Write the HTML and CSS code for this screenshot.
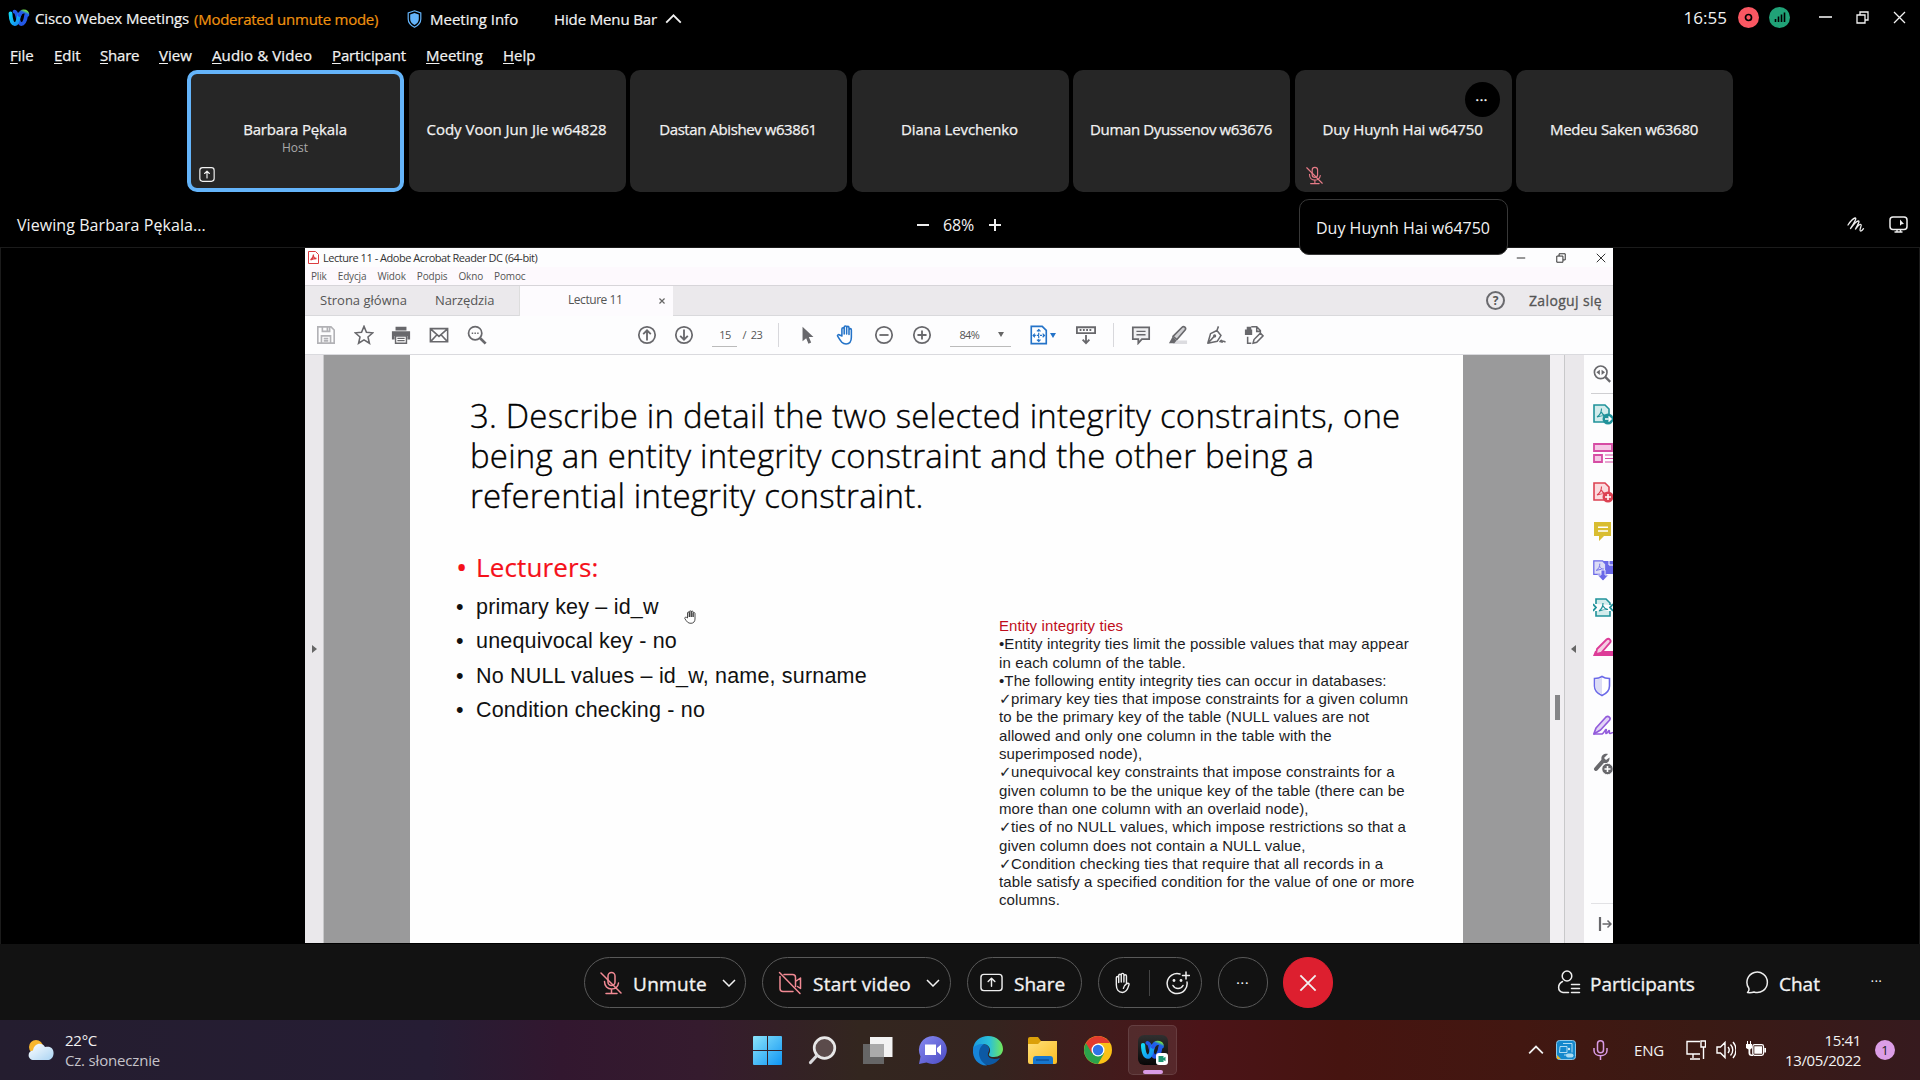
FILE: index.html
```html
<!DOCTYPE html>
<html lang="en">
<head>
<meta charset="utf-8">
<title>Cisco Webex Meetings</title>
<link rel="stylesheet" href="styles.css">
</head>
<body>
<svg width="0" height="0" class="defs" aria-hidden="true">
  <defs>
    <linearGradient id="wxa" x1="0" y1="0" x2="1" y2="1"><stop offset="0" stop-color="#12d8f5"/><stop offset="1" stop-color="#1686f0"/></linearGradient>
    <linearGradient id="wxb" x1="1" y1="0" x2="0" y2="1"><stop offset="0" stop-color="#74e04a"/><stop offset=".4" stop-color="#1d63e8"/><stop offset="1" stop-color="#2556e8"/></linearGradient>
    <linearGradient id="win" x1="0" y1="0" x2="1" y2="1"><stop offset="0" stop-color="#8be4fb"/><stop offset="1" stop-color="#0f95f3"/></linearGradient>
    <linearGradient id="chat" x1="0" y1="0" x2="1" y2="1"><stop offset="0" stop-color="#8689f0"/><stop offset="1" stop-color="#4c4cc4"/></linearGradient>
    <linearGradient id="edge" x1="0" y1="0" x2="1" y2="0"><stop offset="0" stop-color="#1a9ae0"/><stop offset=".55" stop-color="#2bc0d8"/><stop offset="1" stop-color="#72e858"/></linearGradient>
    <linearGradient id="folder" x1="0" y1="0" x2="1" y2="1"><stop offset="0" stop-color="#ffe07a"/><stop offset="1" stop-color="#fbbd22"/></linearGradient>
    <linearGradient id="cloud" x1="0" y1="0" x2="1" y2="1"><stop offset="0" stop-color="#fff"/><stop offset="1" stop-color="#a9d3f3"/></linearGradient>
    <symbol id="webex" viewBox="0 0 22 18"><g fill="none" stroke-width="3.800" stroke-linecap="round"><path stroke="#2358e6" d="M6.500 2.700C10 3 9.500 15 13.300 15c2.600 0 4.300-4.500 4.900-9"/><path stroke="url(#wxa)" d="M2.500 4.500C2.700 10 4 15 6.700 15c3 0 3.600-5.500 4.800-9.500"/><path stroke="url(#wxb)" d="M11.500 6c.9-2.300 2.300-3.500 4.300-3.500 2.300 0 3.700 1.200 3.600 3.300"/></g></symbol>
    <symbol id="mic-off" viewBox="0 0 22 24"><g fill="none" stroke="currentColor" stroke-width="1.500" stroke-linecap="round"><rect x="8" y="1.500" width="7" height="13" rx="3.500"/><path d="M4.500 10.500c0 4.500 3 7.500 7 7.500s6.500-2.500 7-6M11.500 18v4.500M6 22.500h11M1 2l20 20"/></g></symbol>
    <symbol id="share" viewBox="0 0 24 22"><g fill="none" stroke="currentColor" stroke-width="1.700" stroke-linecap="round" stroke-linejoin="round"><rect x="1.500" y="1" width="21" height="20" rx="4"/><path d="M12 16V6.500M8.500 9.500 12 6l3.500 3.500"/></g></symbol>
    <symbol id="chev" viewBox="0 0 14 8"><path fill="none" stroke="currentColor" stroke-width="1.500" d="m1 1 6 6 6-6"/></symbol>
    <symbol id="restore" viewBox="0 0 13 13"><path fill="none" stroke="currentColor" stroke-width="1.300" d="M1 4h8v8H1zM4 4V1h8v8H9"/></symbol>
    <symbol id="close" viewBox="0 0 13 13"><path stroke="currentColor" stroke-width="1.300" d="m1 1 11 11M12 1 1 12"/></symbol>
    <symbol id="pdf" viewBox="0 0 20 22"><path fill="var(--tint)" stroke="currentColor" stroke-width="1.600" d="M1 2h11l4 4v13H1z"/><path fill="none" stroke="currentColor" stroke-width="1.100" d="M4 14c3-2 4.500-4.500 4.500-8.500M8.500 9c.6 2 2 3.500 5 3.500-3 0-6.500.5-9.500 1.500"/></symbol>
  </defs>
</svg>

<header class="titlebar">
  <svg class="logo"><use href="#webex"/></svg>
  <span class="app-name">Cisco Webex Meetings</span>
  <span class="mode">(Moderated unmute mode)</span>
  <svg class="shield" viewBox="0 0 14 18"><path fill="none" stroke="#64b4fa" stroke-width="1.200" d="M7 .8 13.300 3v6c0 4-2.500 6.500-6.300 8.300C3.200 15.500.7 13 .7 9V3z"/><path fill="#64b4fa" d="m7 3 4.300 1.400V9c0 2.700-1.500 4.500-4.300 6-2.800-1.500-4.300-3.300-4.300-6V4.400z"/></svg>
  <span class="info">Meeting Info</span>
  <span class="hide">Hide Menu Bar</span>
  <svg class="chev-up"><use href="#chev"/></svg>
  <div class="window-tools">
    <span class="timer">16:55</span>
    <span class="dot rec"><svg viewBox="0 0 21 21"><circle cx="10.500" cy="10.500" r="3" fill="none" stroke="#000" stroke-width="1.700"/></svg></span>
    <span class="dot net"><svg viewBox="0 0 21 21"><path stroke="#000" stroke-width="1.600" d="M6.500 15v-3M9.500 15V9.500M12.500 15V7.500M15.500 15V5.500"/></svg></span>
    <svg class="wmin" viewBox="0 0 13 13"><path stroke="#fff" stroke-width="1.500" d="M0 6h13"/></svg>
    <svg class="wres"><use href="#restore"/></svg>
    <svg class="wclose"><use href="#close"/></svg>
  </div>
</header>

<nav class="menubar">
  <span class="m1"><u>F</u>ile</span><span class="m2"><u>E</u>dit</span><span class="m3"><u>S</u>hare</span><span class="m4"><u>V</u>iew</span><span class="m5"><u>A</u>udio &amp; Video</span><span class="m6"><u>P</u>articipant</span><span class="m7"><u>M</u>eeting</span><span><u>H</u>elp</span>
</nav>

<section class="people">
  <div class="tile active"><span class="n-mid">Barbara Pękala</span><small>Host</small><svg class="tile-share"><use href="#share"/></svg></div>
  <div class="tile"><span>Cody Voon Jun Jie w64828</span></div>
  <div class="tile"><span class="n-tight">Dastan Abishev w63861</span></div>
  <div class="tile"><span class="n-mid">Diana Levchenko</span></div>
  <div class="tile"><span class="n-tight2">Duman Dyussenov w63676</span></div>
  <div class="tile"><span class="n-mid">Duy Huynh Hai w64750</span><b class="more">•••</b><svg class="tile-mic"><use href="#mic-off"/></svg><div class="tooltip">Duy Huynh Hai w64750</div></div>
  <div class="tile"><span class="n-mid2">Medeu Saken w63680</span></div>
</section>

<section class="viewbar">
  <span class="viewing">Viewing Barbara Pękala...</span>
  <div class="zoom"><i class="minus"></i><span>68%</span><i class="plus"></i></div>
  <div class="view-tools">
    <svg width="18" height="16" viewBox="0 0 18 16"><path fill="none" stroke="#eee" stroke-width="1.300" stroke-linecap="round" stroke-linejoin="round" d="M1 8C3 5 6 1.500 8 1c2-.3 0 3.500-4.500 10.500C6.500 7.500 9.500 3.800 11.300 4c1.800.3-.5 3.500-2.800 8 2.300-3 4.300-5 5.500-4.500 1.300.700-2.300 5.500-.5 6.500 1 .300 2-.8 3-2.300"/></svg>
    <svg width="19" height="17" viewBox="0 0 19 17"><rect x="1" y="1" width="17" height="12.500" rx="3" fill="none" stroke="#eee" stroke-width="1.500"/><path fill="#eee" d="m11 3.500 4 4.500-2.300.2-1.700 1.600z"/><path stroke="#eee" stroke-width="1.400" d="M8 13v2.500M11.500 13v2.500M5.500 16h8"/></svg>
  </div>
</section>

<main class="stage">
  <div class="acrobat">
    <div class="a-title">
      <svg width="11" height="13" viewBox="0 0 11 13"><path fill="#fff" stroke="#dc3c40" d="M.5.5h7l3 3v9H.5z"/><path fill="none" stroke="#dc3c40" stroke-width="1.300" d="M2.500 9C4.500 7.500 5.500 6 5.500 3.500M5.500 5.500c.5 1.500 1.500 2 3 2-2 0-4 .5-6 1.500"/></svg>
      <span>Lecture 11 - Adobe Acrobat Reader DC (64-bit)</span>
      <div class="a-win"><svg viewBox="0 0 13 13"><path stroke="currentColor" stroke-width="1.300" d="M1 6.500h11"/></svg><svg><use href="#restore"/></svg><svg><use href="#close"/></svg></div>
    </div>
    <div class="a-menu"><span>Plik</span><span>Edycja</span><span>Widok</span><span>Podpis</span><span>Okno</span><span>Pomoc</span></div>
    <div class="a-tabs">
      <span class="t-home">Strona główna</span><span class="t-tools">Narzędzia</span>
      <div class="t-doc"><span>Lecture 11</span><svg viewBox="0 0 13 13"><path stroke="#666" stroke-width="2.600" d="m1 1 11 11M12 1 1 12"/></svg></div>
      <span class="help">?</span><span class="login">Zaloguj się</span>
    </div>
    <div class="a-bar">
      <div class="grp g1">
        <svg viewBox="0 0 22 22"><g fill="none" stroke="#b2b2b6" stroke-width="1.800"><path d="M2 2h14.500L20 5.500V20H2zM6 20v-8h10v8M7 2v5h8V2M8.500 15h5M8.500 17.500h5M12.500 3v3"/></g></svg>
        <svg viewBox="0 0 22 22"><path fill="none" stroke="#68686c" stroke-width="1.700" d="m11 1.500 2.700 6.500 7 .6-5.300 4.600 1.600 6.900L11 16.400l-6 3.700 1.600-6.900L1.300 8.600l7-.6z"/></svg>
        <svg viewBox="0 0 22 22"><path fill="#68686c" d="M5 2h12v4H5zM1 7h20v9h-3v-4H4v4H1z"/><path fill="#fff" stroke="#68686c" stroke-width="1.600" d="M5 12h12v8H5z"/><path stroke="#68686c" stroke-width="1.300" d="M7 14.700h8M7 17.200h8"/></svg>
        <svg viewBox="0 0 22 22"><path fill="none" stroke="#68686c" stroke-width="1.700" d="M1.500 4h19v14.500h-19zM2 4.500l9 8 9-8M2 18l6.500-7M20 18l-6.500-7"/></svg>
        <svg viewBox="0 0 22 22"><circle cx="9" cy="9" r="7.300" fill="none" stroke="#68686c" stroke-width="1.900"/><path stroke="#68686c" stroke-width="3" d="m14.500 14.500 6 6"/><path stroke="#68686c" stroke-width="1.600" stroke-dasharray="1.600 1.400" d="M5.200 9h8"/></svg>
      </div>
      <div class="grp g2">
        <svg viewBox="0 0 22 22"><circle cx="11" cy="11" r="9" fill="none" stroke="#68686c" stroke-width="1.900"/><path fill="none" stroke="#68686c" stroke-width="2" d="M11 17V6M6.800 10 11 5.800l4.200 4.200"/></svg>
        <svg viewBox="0 0 22 22"><circle cx="11" cy="11" r="9" fill="none" stroke="#68686c" stroke-width="1.900"/><path fill="none" stroke="#68686c" stroke-width="2" d="M11 5v11M6.800 12l4.200 4.200 4.200-4.200"/></svg>
      </div>
      <span class="page-no">15</span><span class="page-of">/&nbsp; 23</span><i class="sep"></i>
      <div class="grp g3">
        <svg viewBox="0 0 22 22"><path fill="#68686c" d="M5 2v16l4-3.500 2.500 6 3-1.300-2.600-6H17z"/></svg>
        <svg viewBox="0 0 22 22"><path fill="#fff" stroke="#2473c8" stroke-width="1.700" stroke-linejoin="round" d="M6.500 12V4.500c0-2 2.500-2 2.500 0V10 2.500c0-2 2.700-2 2.700 0V10 3c0-2 2.600-2 2.600 0v7.500-5c0-2 2.600-2 2.600 0v8c0 5-2 7.300-5.800 7.300-4 0-5.500-2.200-9.300-8.500-.7-1.300 1-2.300 2.200-1.200z"/></svg>
        <svg viewBox="0 0 22 22"><circle cx="11" cy="11" r="9" fill="none" stroke="#68686c" stroke-width="1.900"/><path stroke="#68686c" stroke-width="2" d="M6 11h10"/></svg>
        <svg viewBox="0 0 22 22"><circle cx="11" cy="11" r="9" fill="none" stroke="#68686c" stroke-width="1.900"/><path stroke="#68686c" stroke-width="2" d="M6 11h10M11 6v10"/></svg>
      </div>
      <div class="scale"><span>84%</span><i class="caret"></i></div>
      <svg class="fit" viewBox="0 0 22 22"><path fill="#fff" stroke="#2473c8" stroke-width="1.800" d="M2.500 1.500h12l4.500 4.500v14.500H2.500z"/><path fill="none" stroke="#2473c8" stroke-width="1.300" stroke-dasharray="2.500 1" d="M10.700 5v13M5 11.500h12"/><path fill="none" stroke="#2473c8" stroke-width="1.300" d="M8.700 7l2-2 2 2M8.700 16l2 2 2-2M6.500 9.500l-2 2 2 2M15 9.500l2 2-2 2"/></svg><i class="caret blue"></i>
      <svg class="ruler" viewBox="0 0 22 22"><path fill="none" stroke="#68686c" stroke-width="2" d="M1 2.500h20V9H1zM11 11v9M7.300 16l3.700 4 3.700-4"/><path stroke="#68686c" stroke-width="2" stroke-dasharray="2 1.600" d="M4 5.500h14"/></svg>
      <i class="sep s2"></i>
      <div class="grp g4">
        <svg viewBox="0 0 22 22"><path fill="#f0f0f2" stroke="#68686c" stroke-width="1.900" d="M2 2.500h18v13h-8l-4 4.500v-4.500H2z"/><path stroke="#68686c" stroke-width="1.500" d="M6 7h10M6 10.700h10"/></svg>
        <svg viewBox="0 0 22 22"><path fill="#dcdce0" d="M9 17h12v4H5z"/><path fill="#cfcfd2" stroke="#68686c" stroke-width="1.800" stroke-linejoin="round" d="m5.500 12.500 10-10c2-2 5 .8 3.300 2.900l-9 10.600z"/><path fill="#68686c" d="m5 13 4.500 4L7 20H1z"/></svg>
        <svg viewBox="0 0 22 22"><path fill="none" stroke="#68686c" stroke-width="1.700" stroke-linejoin="round" d="M2 20 5 9.500l7-3.500 4.500 5.500-4 6.300zM12 6l1.700-4.500M2 20l7-7.500M15 19c2-3 3-2.500 2.500 0 1-1.500 2.200-1.500 4 0"/><circle cx="9.500" cy="12" r="1.800" fill="#68686c"/></svg>
        <svg viewBox="0 0 22 22"><path fill="#68686c" d="M1 5h8v6H1zM3 2h5v3H3z"/><path fill="none" stroke="#68686c" stroke-width="1.700" d="M8 2h6l4 4v3M14 2v5h4M4 13v7h4M10 20l1-4 7-7 3 3-7 7z"/></svg>
      </div>
    </div>
    <div class="a-body">
      <div class="rail"><i class="tri right"></i></div>
      <div class="canvas">
        <article class="page">
          <h1>3. Describe in detail the two selected integrity constraints, one<br>being an entity integrity constraint and the other being a<br>referential integrity constraint.</h1>
          <div class="columns">
            <ul>
              <li class="red">Lecturers:</li>
              <li>primary key – id_w<svg class="grab" viewBox="0 0 13 14"><path fill="#fff" stroke="#222" stroke-width=".8" stroke-linejoin="round" d="M3.500 8V3c0-1.300 1.800-1.300 1.800 0V7 1.800c0-1.300 1.900-1.300 1.900 0V7 2c0-1.300 1.900-1.300 1.900 0v5-3.500c0-1.300 1.900-1.300 1.900 0V9c0 2.500-1.500 4.300-4 4.300C4 13.300 3 12 .8 8.500c-.5-1 1-2 2.700-.5z"/></svg></li>
              <li>unequivocal key - no</li>
              <li>No NULL values – id_w, name, surname</li>
              <li>Condition checking - no</li>
            </ul>
            <div class="notes">
              <p class="dark-red">Entity integrity ties</p>
              <p>•Entity integrity ties limit the possible values that may appear<br>in each column of the table.</p>
              <p>•The following entity integrity ties can occur in databases:</p>
              <p><b>✓</b>primary key ties that impose constraints for a given column<br>to be the primary key of the table (NULL values are not<br>allowed and only one column in the table with the<br>superimposed node),</p>
              <p><b>✓</b>unequivocal key constraints that impose constraints for a<br>given column to be the unique key of the table (there can be<br>more than one column with an overlaid node),</p>
              <p><b>✓</b>ties of no NULL values, which impose restrictions so that a<br>given column does not contain a NULL value,</p>
              <p><b>✓</b>Condition checking ties that require that all records in a<br>table satisfy a specified condition for the value of one or more<br>columns.</p>
            </div>
          </div>
        </article>
      </div>
      <div class="scroll"><i></i></div>
      <div class="rail r2"><i class="tri left"></i></div>
      <aside class="side">
        <svg class="gray first" viewBox="0 0 20 22"><circle cx="8.500" cy="8.500" r="7.300" fill="none" stroke="currentColor" stroke-width="1.900"/><path stroke="currentColor" stroke-width="2.800" d="m13.500 13.500 6 6"/><path fill="currentColor" d="M7.500 5.500v6l-4-3zM9.500 5.500v6l4-3z"/></svg>
        <hr>
        <div class="tools">
          <svg class="teal" viewBox="0 0 20 22"><use href="#pdf" width="20" height="22"/><circle cx="15" cy="16" r="5.500" fill="currentColor"/><path fill="none" stroke="#fff" stroke-width="1.500" d="M12 16h5.500M15.500 13.500 18 16l-2.500 2.500"/></svg>
          <svg class="pink" viewBox="0 0 20 22"><path fill="var(--tint)" stroke="currentColor" stroke-width="1.800" d="M1 2h18v7H1zM1 13h8v7H1z"/><path stroke="currentColor" stroke-width="1.200" d="M12 13h8M12 16.500h8M12 20h8"/></svg>
          <svg class="redi" viewBox="0 0 20 22"><use href="#pdf" width="20" height="22"/><circle cx="15" cy="16" r="5.500" fill="currentColor"/><path stroke="#fff" stroke-width="1.500" d="M12 16h6M15 13v6"/></svg>
          <svg class="yellow" viewBox="0 0 20 22"><path fill="currentColor" d="M1 2h17v14H11l-5 5v-5H1z"/><path stroke="#fff" stroke-width="1.500" d="M5 7.300h10M5 11h10"/></svg>
          <svg class="blue" viewBox="0 0 20 22"><path fill="currentColor" d="M10 2h10v13H10z"/><use href="#pdf" width="16" height="18"/><path fill="currentColor" stroke="#fff" stroke-width=".8" d="M8 11h4v5h3.500L10 22l-5.500-6H8z"/><path fill="none" stroke="#fff" d="M16 2v4h4"/></svg>
          <svg class="teal" viewBox="0 0 20 22"><path fill="var(--tint)" stroke="currentColor" stroke-width="1.600" d="M3 7V2h10l4 4v2M3 14v5h14v-5"/><path fill="none" stroke="currentColor" stroke-width="1.800" d="m0 7 3 3.500L0 14M20 7l-3 3.500 3 3.500"/><path fill="none" stroke="currentColor" stroke-width="1.200" d="M6 14c3-2 4-4.500 4-8M10 9c1 2 2 3 5 3.500-4 0-6 .5-9 1.500"/></svg>
          <svg class="magenta" viewBox="0 0 20 22"><path fill="currentColor" d="M9 15h11v5H0l2-5z"/><path fill="var(--tint)" stroke="currentColor" stroke-width="1.800" d="m4 13 9.500-9.500c2.500-2 5.500 1 3.300 3.400L8.500 16.500 3 18z"/></svg>
          <svg class="blue" viewBox="0 0 20 22"><path fill="#fff" stroke="currentColor" stroke-width="1.600" d="M9 1.500c2.500 1.800 5 2 7.500 2V11c0 5-3 7.500-7.500 9.500C4.500 18.500 1.500 16 1.500 11V3.500c2.500 0 5-.2 7.500-2z"/><path fill="var(--tint)" d="M9 2.700v16.600C5 17.500 2.400 15 2.400 11V4.400C5 4.300 7 4 9 2.700z"/></svg>
          <svg class="purple" viewBox="0 0 20 22"><path fill="var(--tint)" stroke="currentColor" stroke-width="1.700" stroke-linejoin="round" d="m3 14 10-11c2.300-1.800 5.300.8 3.500 3.200L7.500 16 .8 20z"/><path fill="none" stroke="currentColor" stroke-width="1.600" d="M1 20h8c2-1 3-4 4-4.500s-1 4 .3 4 1.700-3 2.700-3-.5 3 1 3 2-1 3-1"/></svg>
          <svg class="gray" viewBox="0 0 20 22"><path fill="none" stroke="currentColor" stroke-width="4" stroke-linecap="round" d="m3 16 7-8"/><path fill="currentColor" d="M15 1c-5-1-8 3-6 7s8 2 7.500-3.500L13 7l-2-2z"/><circle cx="14.500" cy="16" r="5.700" fill="currentColor" stroke="#fff" stroke-width=".8"/><path stroke="#fff" stroke-width="1.600" d="M11.500 16h6M14.500 13v6"/></svg>
        </div>
        <hr class="low">
        <svg class="gray out" viewBox="0 0 14 14"><path fill="none" stroke="currentColor" stroke-width="2.200" d="M2 0v14"/><path fill="none" stroke="currentColor" stroke-width="1.500" d="M4.500 7H13M9.500 3.500 13 7l-3.500 3.500"/></svg>
      </aside>
    </div>
  </div>
</main>

<footer class="controls">
  <div class="side-space"></div>
  <div class="buttons">
    <div class="pill unmute"><svg class="ic-mic"><use href="#mic-off"/></svg><span>Unmute</span><svg class="dn"><use href="#chev"/></svg></div>
    <div class="pill video"><svg class="ic-vid" viewBox="0 0 24 24"><g fill="none" stroke="currentColor" stroke-width="1.500" stroke-linecap="round" stroke-linejoin="round"><path d="M6 3.500h8.500a3 3 0 0 1 3 3v9M15 20.500H5a3 3 0 0 1-3-3v-12M17.500 10.500l5-3.500v10.500l-3-2M1.500 1.500 22 22.500"/></g></svg><span>Start video</span><svg class="dn"><use href="#chev"/></svg></div>
    <div class="pill sharebtn"><svg class="ic-share" viewBox="0 0 24 19"><g fill="none" stroke="#eee" stroke-width="1.500" stroke-linecap="round" stroke-linejoin="round"><rect x="1" y="1" width="22" height="17" rx="3"/><path d="M12 13.500V5.500M8.500 8.500 12 5l3.500 3.500"/></g></svg><span>Share</span></div>
    <div class="pill react">
      <svg width="15" height="22" viewBox="0 0 17 24"><path fill="none" stroke="#eee" stroke-width="1.600" stroke-linejoin="round" stroke-linecap="round" d="M1.500 14V6c0-1.800 2.700-1.800 2.700 0v5.500V3.500c0-1.900 2.900-1.900 2.900 0v7.500V2.500c0-1.900 3-1.900 3 0V11V4c0-1.900 2.900-1.900 2.900 0v9c2-1.500 3.300-.4 2.800 1.100C14.500 19 13 22.700 8.500 22.700S1.500 19 1.500 14zM9.500 18c.3-2 1.500-3.800 3.500-5"/></svg>
      <i></i>
      <svg width="24" height="24" viewBox="0 0 24 24"><path fill="none" stroke="#eee" stroke-width="1.500" stroke-linecap="round" d="M14 3A10 10 0 1 0 21 11M7 14.500c2 4 8 4 10 0M20 1v7M16.500 4.500h7"/><circle cx="8" cy="9.500" r="1.400" fill="#eee"/><circle cx="15" cy="9.500" r="1.400" fill="#eee"/></svg>
    </div>
    <div class="pill round">•••</div>
    <div class="pill round leave"><svg><use href="#close"/></svg></div>
  </div>
  <div class="panels">
    <svg class="ic-part" viewBox="0 0 24 24"><g fill="none" stroke="#eee" stroke-width="1.500" stroke-linecap="round"><ellipse cx="10" cy="6" rx="4.800" ry="5"/><path d="M11.500 22.500H6c-6-1-5.500-8.500-.5-11M14.500 14.500h8M14.500 18.500h8M14.500 22.500h8"/></g></svg>
    <span class="participants">Participants</span>
    <svg class="ic-chat" viewBox="0 0 23 23"><path fill="none" stroke="#eee" stroke-width="1.500" stroke-linejoin="round" d="M1.500 21.500c1.500-1.500 2-2.500 1.200-4.500A10.200 10.200 0 1 1 8 21c-2.500.8-4 .8-6.500.5z"/></svg>
    <span>Chat</span><span class="dots">•••</span>
  </div>
</footer>

<footer class="taskbar">
  <div class="weather">
    <svg width="26" height="22" viewBox="0 0 26 22"><circle cx="8" cy="8" r="7" fill="#f8b62c"/><path fill="url(#cloud)" d="M6 21c-7 0-7-9-1-9.500C6 4 14 2.500 17 8c6-1.500 9 2 8.500 7-.5 4-3 6-6 6z"/></svg>
    <div><b>22°C</b><span>Cz. słonecznie</span></div>
  </div>
  <div class="apps">
    <div><svg width="29" height="29" viewBox="0 0 29 29"><path fill="url(#win)" d="M0 1q0-1 1-1h13v14H0zM15 0h13q1 0 1 1v13H15zM0 15h14v14H1q-1 0-1-1zM15 15h14v13q0 1-1 1H15z"/></svg></div>
    <div><svg width="29" height="29" viewBox="0 0 29 29"><circle cx="16.500" cy="12" r="10.300" fill="#5b4b4b" stroke="#e8e8e8" stroke-width="2.700"/><path stroke="#d9d9dc" stroke-width="3.200" stroke-linecap="round" d="m8.500 20-6 6.500"/></svg></div>
    <div><svg width="31" height="29" viewBox="0 0 31 29"><path fill="#666" d="M1 8h21v20H1z"/><path fill="#f3f3f3" d="M8 1h22.500v20H8z"/><path fill="#aaa" d="M8 8h14v13H8z"/></svg></div>
    <div><svg width="30" height="30" viewBox="0 0 30 30"><path fill="url(#chat)" d="M15 1a14 14 0 1 1-6.500 26.500L1 29l1.500-7.500A14 14 0 0 1 15 1z"/><path fill="#fff" d="M7 9.500h11V20H7zM19 13l4-3.500V20l-4-3.500z"/></svg></div>
    <div><svg width="31" height="31" viewBox="0 0 31 31"><path fill="#0c59a4" d="M1 14c1-3 5-5 9-5 6 0 8 4 7 7-4 6 3 10 11 7-5 8-15 9-21 4-4-3-6-8-6-13z"/><path fill="#1684d8" d="M1 14c1-5 6-7 11-5-5 3-6 9-4 14 1 3 4 6 7 7.500C7 31 0 24 1 14z"/><path fill="url(#edge)" d="M1 14C2 6 8 1 16 1c9 0 15 6 15 13 0 5-4 8-9 8-5 0-6-2-4.500-4 2-4-1-9-6.500-9S2 11 1 14z"/></svg></div>
    <div><svg width="31" height="29" viewBox="0 0 31 29"><path fill="#dba009" d="M1 3q0-2 2-2h8l3 4v6H1z"/><path fill="url(#folder)" d="M1 8h10l3-3h16v21q0 2-2 2H3q-2 0-2-2z"/><path fill="#1777cf" d="M6 28v-5q0-3 3-3h14q3 0 3 3v5z"/><path stroke="#0b4b93" stroke-width="1.300" d="M9 24h13"/></svg></div>
    <div><svg width="28" height="28" viewBox="0 0 28 28"><circle cx="14" cy="14" r="14" fill="#fbc116"/><path fill="#2ba24c" d="M14 14 1.900 7A14 14 0 0 0 14 28l6-10.500z"/><path fill="#e33b2e" d="M1.900 7a14 14 0 0 1 24.200 0H14l-6 10.500z"/><circle cx="14" cy="14" r="6.500" fill="#fff"/><circle cx="14" cy="14" r="5.200" fill="#3074e8"/></svg></div>
    <div class="current"><span class="wx"><svg class="wxl"><use href="#webex"/></svg><svg class="wxb" viewBox="0 0 12 12"><rect width="12" height="12" rx="3" fill="#fff"/><path fill="#1a9572" d="M2.500 3h5v2l2-1.200v4.400l-2-1.200v2h-5z"/></svg></span></div>
  </div>
  <div class="tray">
    <svg class="t-chev"><use href="#chev"/></svg>
    <svg class="t-intel" viewBox="0 0 20 20"><rect x=".5" y=".5" width="19" height="19" rx="3" fill="#1488cd" stroke="#8cc8ea"/><path fill="none" stroke="#bfe3f7" stroke-width=".9" d="M4 6.500h7v6H3.500zM7 3.500h9v9M8 15h4"/><circle cx="13" cy="9" r="1.200" fill="#cfeaf8"/><rect x="10" y="13.500" width="7.500" height="4" rx="2" fill="#a9dbf3"/><path fill="#e7b733" d="M1 15v4h4z"/></svg>
    <svg class="t-mic" viewBox="0 0 15 20"><g fill="none" stroke="#d99be5" stroke-width="1.500"><rect x="4.500" y=".8" width="6" height="12" rx="3"/><path d="M1 8v2.500c0 7 13 7 13 0V8M7.500 16v4"/></g></svg>
    <span class="lang">ENG</span>
    <svg class="t-net" viewBox="0 0 20 20"><path fill="none" stroke="#fff" stroke-width="1.400" d="M14 1.500H1v12.500h13M7 14v4M4 19h10M17.500 7v12M15 1h4.500v6H15z"/></svg>
    <svg class="t-vol" viewBox="0 0 20 20"><path fill="none" stroke="#fff" stroke-width="1.400" d="M1 7h3.500L9 2.500v15L4.500 13H1zM12 7c1.500 1.800 1.500 4.200 0 6M14.500 4.500c3 3 3 8 0 11M17 2c4 4.500 4 11.500 0 16"/></svg>
    <svg class="t-bat" viewBox="0 0 20 20"><path fill="#fff" d="M1 1h1v3h2V1h1v3h1v4L4.300 9.500V13q0 1.500 1.500 1.500H7V16H5.500Q2.500 16 2.500 13V9.500L0 8V4h1z"/><rect x="6.800" y="4.700" width="10.700" height="10.600" rx="1.800" fill="none" stroke="#fff" stroke-width="1.300"/><path fill="#fff" d="M8.300 6.300H16v7.400H8.300zM18.300 8H20v4.500h-1.700z"/></svg>
    <div class="clock"><span>15:41</span><span>13/05/2022</span></div>
    <span class="badge">1</span>
  </div>
</footer>
</body>
</html>
```
FILE: styles.css
```css
* { box-sizing: border-box; }
body { margin: 0; width: 1920px; height: 1080px; overflow: hidden; display: flex; flex-direction: column; background: #000; color: #f2f2f2; font: 15px/20px "Open Sans", "Noto Sans", sans-serif; }
svg { display: block; flex: none; }
span { white-space: nowrap; }
i { display: block; flex: none; }
.defs { position: absolute; }

.titlebar { height: 38px; flex: none; display: flex; align-items: center; padding: 0 0 1px 8px; -webkit-text-stroke: .2px; }
.logo { width: 22px; height: 18px; margin-right: 5px; margin-top: -2px; }
.app-name { width: 159px; letter-spacing: -.1px; margin-top: -1px; }
.mode { width: 213px; color: #ef920f; letter-spacing: -.25px; }
.shield { width: 15px; height: 18px; margin-right: 8px; }
.info { width: 124px; }
.hide { width: 111px; letter-spacing: -.13px; }
.chev-up { width: 17px; height: 10px; transform: scaleY(-1); }
.window-tools { margin-left: auto; padding: 0 14px 2px 0; display: flex; align-items: center; -webkit-text-stroke: 0; }
.timer { font-size: 17px; width: 54px; letter-spacing: 0; }
.dot { width: 21px; height: 21px; border-radius: 50%; margin-right: 10.500px; }
.dot svg { width: 21px; height: 21px; }
.rec { background: #fa5762; }
.net { background: #20a277; }
.wmin, .wres, .wclose { width: 13px; height: 13px; }
.wmin { margin: 0 24.500px 0 18px; }
.wres { margin-right: 24px; }

.menubar { height: 32px; flex: none; display: flex; padding: 7px 0 0 10px; -webkit-text-stroke: .25px; }
.menubar u { text-decoration-thickness: 1px; text-underline-offset: 2px; }
.m1 { width: 44px; } .m2 { width: 46px; } .m3 { width: 59px; letter-spacing: -.2px; } .m4 { width: 53px; } .m5 { width: 120px; letter-spacing: .1px; } .m6 { width: 94px; letter-spacing: -.15px; } .m7 { width: 77px; }

.people { height: 122px; flex: none; display: grid; grid-template-columns: repeat(7, 217px); gap: 4.500px; padding-left: 187px; }
.tile { position: relative; background: #262626; border-radius: 10px; display: flex; flex-direction: column; align-items: center; padding: 49px 1px 0 0; -webkit-text-stroke: .25px; }
.tile.active { border: 4px solid #64b4fa; padding-top: 45px; }
.tile small { font-size: 12px; line-height: 16px; color: #aaa; margin-top: 1px; -webkit-text-stroke: 0; }
.n-mid { letter-spacing: -.15px; } .n-mid2 { letter-spacing: -.28px; } .n-tight { letter-spacing: -.42px; } .n-tight2 { letter-spacing: -.36px; }
.tile-share { position: absolute; left: 7px; bottom: 6px; width: 18px; height: 15px; }
.tile-mic { position: absolute; left: 11px; bottom: 7px; width: 17px; height: 19px; color: #e77b87; }
.more { position: absolute; right: 12px; top: 12px; width: 35px; height: 35px; border-radius: 50%; background: #000; font: 8px/35px "Open Sans", sans-serif; letter-spacing: 1.200px; text-align: center; }
.tooltip { position: absolute; z-index: 5; left: 4px; top: 129px; width: 209px; height: 56px; border: 1px solid #383838; border-radius: 10px; background: #000; font-size: 16px; line-height: 56px; text-align: center; white-space: nowrap; -webkit-text-stroke: 0; }

.viewbar { height: 56px; flex: none; display: grid; grid-template-columns: 917px 1fr auto; align-items: center; padding: 10px 12px 0 0; border-bottom: 1px solid #1b1b1b; }
.viewing { padding-left: 17px; font-size: 16px; letter-spacing: .07px; }
.zoom { display: flex; align-items: center; gap: 14px; font-size: 16px; }
.zoom span { letter-spacing: -.2px; width: 32px; }
.minus, .plus { width: 12px; height: 12px; background: linear-gradient(#eee, #eee) center / 12px 2px no-repeat; }
.plus { background: linear-gradient(#eee, #eee) center / 12px 2px no-repeat, linear-gradient(#eee, #eee) center / 2px 12px no-repeat; }
.view-tools { display: flex; gap: 24px; align-items: center; }

.stage { height: 696px; flex: none; display: flex; justify-content: center; padding-right: 2px; border-left: 1px solid #1b1b1b; border-right: 1px solid #1b1b1b; }
.acrobat { width: 1308px; height: 695px; background: #fdfdfe; color: #555; display: flex; flex-direction: column; overflow: hidden; }
.a-title { height: 19px; flex: none; display: flex; align-items: center; padding-left: 3px; color: #333; font-size: 11px; letter-spacing: -.47px; }
.a-title span { margin-left: 4px; }
.a-win { margin-left: auto; display: flex; gap: 30px; padding-right: 7px; }
.a-win svg { width: 10px; height: 10px; }
.a-menu { height: 19px; flex: none; display: flex; gap: 11px; padding-left: 6px; font-size: 10px; line-height: 18px; letter-spacing: -.15px; background: #fdf9fd; border-bottom: 1px solid #d7d5d9; }
.a-tabs { height: 30px; flex: none; display: flex; align-items: center; background: #ebe9ec; border-bottom: 1px solid #d9d9dc; }
.a-tabs span { margin-top: -1px; }
.t-home { padding-left: 15px; width: 130px; font-size: 13px; }
.t-tools { width: 84px; font-size: 13px; letter-spacing: -.1px; }
.t-doc { width: 154px; height: 30px; background: #fdfbfe; display: flex; align-items: center; padding-left: 48px; font-size: 12px; letter-spacing: -.45px; border-left: 1px solid #ddd; }
.t-doc svg { width: 6px; height: 6px; margin-left: 37px; }
.a-tabs .help { margin: -1px 0 0 auto; width: 19px; height: 19px; border: 2px solid #6a6a6e; border-radius: 50%; text-align: center; font-weight: 700; font-size: 12px; line-height: 15px; }
.a-tabs .login { width: 73px; margin: 1px 11px 0 24px; font-size: 14px; letter-spacing: .35px; -webkit-text-stroke: .3px; }
.a-bar { height: 39px; flex: none; display: flex; align-items: center; border-bottom: 1px solid #dadade; font-size: 11px; }
.grp { display: flex; gap: 17.700px; }
.grp svg, .fit, .ruler { width: 20px; height: 20px; }
.g1 { margin-left: 11px; }
.g2 { margin-left: 150px; }
.page-no { width: 25px; margin-left: 18px; text-align: center; border-bottom: 1px solid #bbb; line-height: 22px; letter-spacing: -.5px; }
.page-of { margin-left: 5px; width: 22px; letter-spacing: -.5px; }
.sep { width: 1px; height: 24px; background: #d8d8dc; margin-left: 14px; }
.g3 { margin-left: 19px; }
.scale { width: 61px; margin-left: 18px; display: flex; align-items: center; justify-content: space-between; padding: 0 7px 0 10px; line-height: 22px; border-bottom: 1px solid #bbb; letter-spacing: -.7px; }
.caret { border: 3.500px solid transparent; border-top: 5px solid #666; border-bottom: 0; }
.fit { margin-left: 18px; }
.caret.blue { border-top-color: #2473c8; margin-left: 1px; }
.ruler { margin-left: 20px; }
.s2 { margin-left: 17px; }
.g4 { margin-left: 17px; }

.a-body { flex: 1; display: flex; min-height: 0; }
.rail { width: 19px; background: #eae8eb; display: flex; align-items: center; justify-content: center; border-right: 1px solid #c8c8ca; }
.r2 { width: 20px; border-right: 0; border-left: 1px solid #c8c8ca; padding-right: 2px; }
.tri { border: 4px solid transparent; }
.tri.right { border-left: 5px solid #666; border-right: 0; }
.tri.left { border-right: 5px solid #666; border-left: 0; }
.canvas { width: 1226px; background: #9a9a9b; padding: 0 87px 0 86px; }
.page { height: 100%; background: #fefefe; color: #111; padding-top: 41px; overflow: hidden; }
h1 { margin: 0 0 0 60px; font: 300 33px/40px "Open Sans", sans-serif; letter-spacing: .2px; white-space: nowrap; color: #000; -webkit-text-stroke: .35px; }
.columns { display: flex; justify-content: space-between; padding: 33px 0 0 46px; }
ul { list-style: none; margin: 0; padding: 0; font: 21.500px/34.300px "Liberation Sans", Arial, sans-serif; letter-spacing: .19px; }
li { display: flex; white-space: nowrap; }
li::before { content: "•"; width: 20px; flex: none; }
li.red { color: #f5101a; font: 26px/36px "Open Sans", sans-serif; letter-spacing: .15px; margin-bottom: 5px; -webkit-text-stroke: .2px; }
li.red::before { font-size: 30px; }
.grab { width: 13px; height: 14px; margin: 20px 0 0 25px; }
.notes { width: 464px; margin-top: 68px; font: 15px/18.300px "Liberation Sans", Arial, sans-serif; letter-spacing: .12px; color: #1c1c24; }
.notes p { margin: 0; white-space: nowrap; }
.notes p.dark-red { color: #c00d1b; }
.notes b { display: inline-block; width: 12px; font: 15px/16px "DejaVu Sans", sans-serif; letter-spacing: 0; }
.scroll { width: 14px; background: #f1eff2; padding: 340px 0 0 5px; }
.scroll i { width: 5px; height: 25px; background: #858588; }
.side { width: 29px; padding-left: 9px; overflow: hidden; }
.side svg { width: 20px; height: 22px; --tint: #fff; }
.side .first { width: 18px; height: 19px; margin-top: 10px; }
.side hr { width: 22px; height: 1px; background: #cfcfd2; border: 0; margin: 9px 0 9px -2px; }
.tools { display: flex; flex-direction: column; gap: 16.900px; }
.side .gray { color: #68686c; } .side .teal { color: #20929a; --tint: #d3ecec; } .side .pink { color: #d64ca4; --tint: #f5c9e6; } .side .redi { color: #dc4252; --tint: #fbdcdf; } .side .yellow { color: #d9bd31; } .side .blue { color: #6b69e8; --tint: #dcdcf5; } .side .magenta { color: #dd3c98; --tint: #f5cde2; } .side .purple { color: #925bdb; --tint: #e2d3f6; }
.side hr.low { margin: 128px 0 13px -2px; background: #e2e2e5; }
.side .out { width: 14px; height: 14px; margin-left: 5px; }

.controls { height: 76px; flex: none; background: #121212; display: flex; padding-top: 13px; font-size: 19px; }
.controls span { -webkit-text-stroke: .35px; margin-top: 3px; }
.side-space { width: 584px; }
.buttons { display: flex; gap: 16px; width: 973px; }
.pill { height: 51px; border: 1px solid #595959; border-radius: 26px; display: flex; align-items: center; }
.unmute { width: 162px; } .video { width: 189px; } .sharebtn { width: 115px; } .react { width: 104px; } .round { width: 50px; justify-content: center; font-size: 8px; letter-spacing: 1.300px; }
.ic-mic { width: 22px; height: 24px; margin: 0 11px 0 15px; color: #f28a94; }
.unmute span { width: 89px; letter-spacing: .3px; }
.dn { width: 14px; height: 8px; }
.ic-vid { width: 24px; height: 24px; margin: 0 11px 0 15px; color: #f28a94; }
.video span { width: 113px; letter-spacing: .25px; }
.ic-share { width: 23px; height: 19px; margin: 0 11px 0 12px; }
.react { padding-left: 16px; }
.react i { width: 1px; height: 26px; background: #444; margin: 0 16px 0 19px; }
.leave { background: #dd1f2f; border-color: #dd1f2f; margin-left: -1px; }
.leave svg { width: 18px; height: 18px; }
.panels { display: flex; align-items: center; height: 50px; }
.ic-part { width: 24px; height: 24px; margin-right: 9px; }
.participants { width: 156px; }
.ic-chat { width: 23px; height: 23px; margin-right: 10px; }
.controls .dots { font-size: 7px; letter-spacing: 1.300px; margin: 0 0 0 51px; -webkit-text-stroke: 0; }

.taskbar { height: 60px; flex: none; display: grid; grid-template-columns: 743px 785px 1fr; background: linear-gradient(90deg, #241d2f 0, #261d34 430px, #32172f 560px, #351b2e 700px, #33261f 860px, #34241f 990px, #421b1c 1110px, #4b1418 1200px, #461410 1340px, #421711 1520px, #3a1a14 1700px, #361a1e 1920px); }
.weather { display: flex; align-items: center; padding-left: 28px; gap: 11px; }
.weather div, .clock { display: flex; flex-direction: column; line-height: 20px; }
.weather b { font-weight: 400; letter-spacing: -.26px; }
.weather span { color: #c5c3ca; letter-spacing: -.18px; }
.apps { display: flex; gap: 6px; padding-top: 5px; }
.apps > div { width: 49px; height: 50px; display: flex; align-items: center; justify-content: center; }
.apps .current { position: relative; background: #ffffff14; border: 1px solid #ffffff1a; border-radius: 5px; }
.current::after { content: ""; position: absolute; left: 14px; bottom: 0; width: 20px; height: 4px; border-radius: 2px; background: #d99be5; }
.wx { position: relative; width: 30px; height: 30px; border-radius: 6px; background: linear-gradient(#303030, #070707); padding: 5px 2px; }
.wxl { width: 25px; height: 20px; }
.wxb { position: absolute; right: 0; bottom: 0; width: 12px; height: 12px; }
.tray { display: flex; align-items: center; }
.t-chev { width: 16px; height: 10px; transform: scaleY(-1); margin-right: 12px; }
.t-intel { width: 20px; height: 20px; margin-right: 17px; }
.t-mic { width: 15px; height: 20px; margin-right: 26px; }
.lang { width: 52px; letter-spacing: -.18px; }
.t-net, .t-vol, .t-bat { width: 20px; height: 20px; margin-right: 10px; }
.clock { width: 85px; text-align: right; letter-spacing: -.36px; }
.tray .clock { margin-top: -1px; }
.badge { width: 20px; height: 20px; margin-left: 14px; border-radius: 50%; background: #dc9ee6; color: #222; text-align: center; font-size: 13px; }
```
